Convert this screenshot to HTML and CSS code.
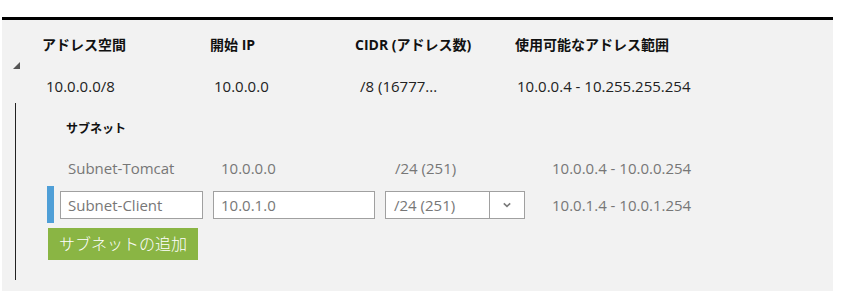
FILE: index.html
```html
<!DOCTYPE html>
<html lang="ja">
<head>
<meta charset="utf-8">
<link rel="stylesheet" href="styles.css">
</head>
<body>
<div class="panel">
  <div class="grid head">
    <div class="c1">アドレス空間</div>
    <div class="c2">開始 IP</div>
    <div class="c3">CIDR (アドレス数)</div>
    <div class="c4">使用可能なアドレス範囲</div>
  </div>
  <div class="toggle-row"><span class="tri"></span></div>
  <div class="grid data">
    <div class="c1">10.0.0.0/8</div>
    <div class="c2">10.0.0.0</div>
    <div class="c3">/8 (16777...</div>
    <div class="c4">10.0.0.4 - 10.255.255.254</div>
  </div>
  <div class="tree">
    <div class="sub-title">サブネット</div>
    <div class="srow">
      <div class="s1">Subnet-Tomcat</div>
      <div class="s2">10.0.0.0</div>
      <div class="s3">/24 (251)</div>
      <div class="s4">10.0.0.4 - 10.0.0.254</div>
    </div>
    <div class="erow">
      <span class="mark"></span>
      <div class="field f1">Subnet-Client</div>
      <div class="field f2">10.0.1.0</div>
      <div class="field f3"><span class="sel-text">/24 (251)</span><span class="sel-btn"><svg width="10" height="6" viewBox="0 0 10 6"><path d="M1.8 1.3 L5 4.3 L8.2 1.3" fill="none" stroke="#7a7a7a" stroke-width="1.6"/></svg></span></div>
      <div class="erange">10.0.1.4 - 10.0.1.254</div>
    </div>
    <div class="add-btn">サブネットの追加</div>
  </div>
</div>
</body>
</html>
```

FILE: styles.css
```css
html, body {
  margin: 0;
  padding: 0;
  background: #ffffff;
}
body {
  font-family: "Open Sans", "Noto Sans CJK JP", sans-serif;
  color: #222;
  font-size: 15px;
}
.panel {
  margin: 17px 0 0 2px;
  width: 831px;
  height: 271px;
  border-top: 3px solid #000;
  background: #f2f2f2;
}
.grid {
  display: grid;
  grid-template-columns: 168px 145px 160px 200px;
  padding-left: 40px;
}
.head {
  padding-top: 14px;
  height: 22px;
  font-weight: bold;
  font-size: 14px;
  line-height: 22px;
  color: #111;
}
.toggle-row {
  height: 12px;
  padding-top: 6px;
}
.tri {
  display: block;
  width: 0;
  height: 0;
  margin: 0 0 0 11px;
  border-style: solid;
  border-width: 0 0 7px 7px;
  border-color: transparent transparent #555 transparent;
}
.data {
  line-height: 22px;
  height: 22px;
  padding-top: 1px;
  color: #222;
}
.data .c1 { padding-left: 4px; }
.data .c2 { padding-left: 4px; }
.data .c3 { padding-left: 5px; }
.data .c4 { padding-left: 2px; }
.tree {
  margin: 6px 0 0 13px;
  border-left: 1px solid #222;
  height: 177px;
}
.sub-title {
  font-weight: bold;
  font-size: 12px;
  padding: 16px 0 0 50px;
  line-height: 20px;
  color: #111;
}
.srow {
  display: grid;
  grid-template-columns: 153px 174px 157px 200px;
  padding: 18px 0 0 52px;
  line-height: 22px;
  color: #777;
}
.erow {
  display: flex;
  align-items: center;
  margin-top: 7px;
  padding-left: 31px;
  height: 37px;
}
.mark {
  width: 7px;
  height: 37px;
  background: #4f9fd7;
  margin-right: 6px;
}
.field {
  box-sizing: border-box;
  height: 28px;
  border: 1px solid #a0a0a0;
  background: #fff;
  color: #777;
  line-height: 26px;
  padding-left: 7px;
  margin-right: 10px;
}
.f1 { width: 143px; }
.f2 { width: 162px; }
.f3 {
  width: 140px;
  display: flex;
  padding-left: 0;
}
.sel-text {
  flex: 1;
  padding-left: 8px;
}
.sel-btn {
  width: 34px;
  border-left: 1px solid #a0a0a0;
  display: flex;
  align-items: center;
  justify-content: center;
}
.erange {
  margin-left: 17px;
  color: #777;
}
.add-btn {
  margin: 5px 0 0 32px;
  width: 150px;
  height: 32px;
  background: #8ab544;
  color: #fff;
  font-size: 16px;
  font-weight: 300;
  line-height: 32px;
  box-sizing: border-box;
  padding-left: 11px;
}
```
